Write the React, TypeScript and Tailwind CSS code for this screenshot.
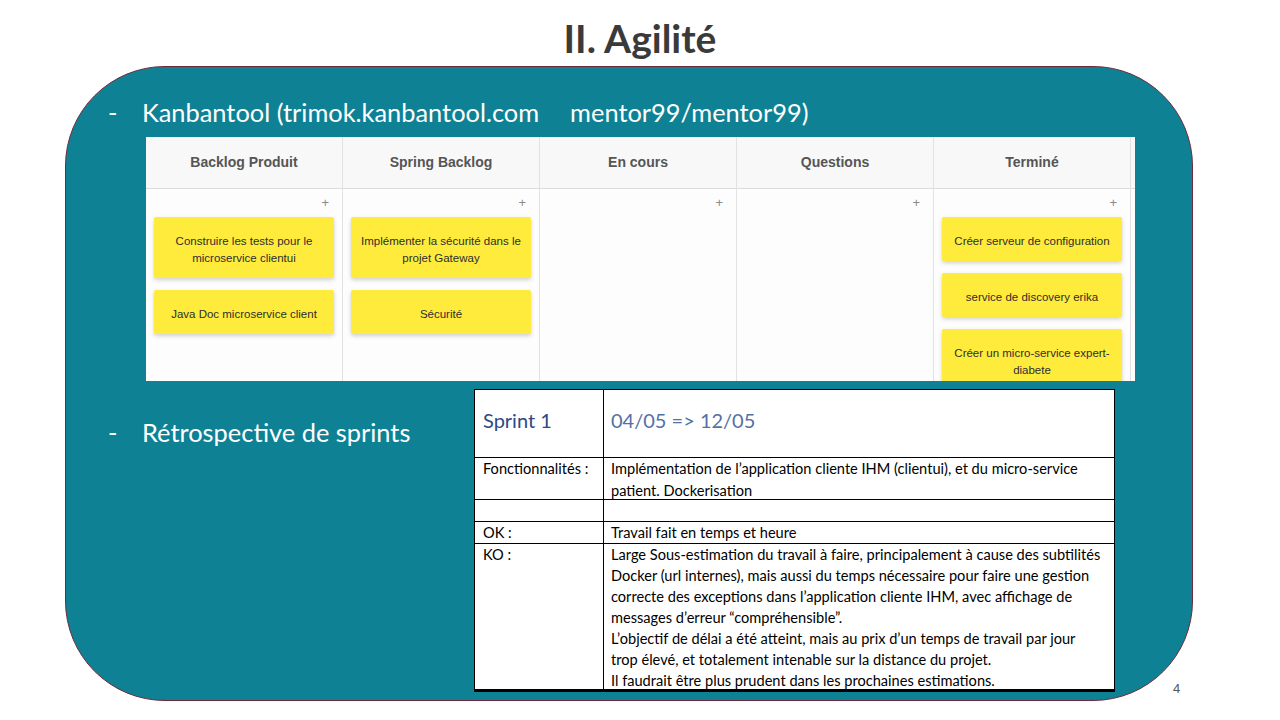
import React from 'react';

type Card = { text: React.ReactNode };

const columns: { title: string; cards: Card[] }[] = [
  {
    title: 'Backlog Produit',
    cards: [
      { text: <>Construire les tests pour le<br />microservice clientui</> },
      { text: 'Java Doc microservice client' },
    ],
  },
  {
    title: 'Spring Backlog',
    cards: [
      { text: <>Implémenter la sécurité dans le<br />projet Gateway</> },
      { text: 'Sécurité' },
    ],
  },
  { title: 'En cours', cards: [] },
  { title: 'Questions', cards: [] },
  {
    title: 'Terminé',
    cards: [
      { text: 'Créer serveur de configuration' },
      { text: 'service de discovery erika' },
      { text: <>Créer un micro-service expert-<br />diabete</> },
    ],
  },
];

const Bullet: React.FC<{ children: React.ReactNode }> = ({ children }) => (
  <div className="flex items-center h-[42px] text-white text-[25.4px] font-['Lato',sans-serif] whitespace-nowrap">
    <span className="w-[76px] pl-[42px]">-</span>
    <span>{children}</span>
  </div>
);

const Kanban: React.FC = () => (
  <div className="ml-[80px] w-[989px] h-[244px] bg-white overflow-hidden flex font-['Liberation_Sans',Arial,sans-serif]">
    {columns.map((col) => (
      <div key={col.title} className="w-[197px] shrink-0 flex flex-col border-r border-[#e2e2e2]">
        <div className="h-[52px] shrink-0 flex items-center justify-center bg-[#f8f8f8] border-b border-[#dcdcdc] text-[14px] font-bold text-[#555]">
          {col.title}
        </div>
        <div className="flex-1 bg-[#fdfdfd] px-[8px]">
          <div className="h-[28px] flex items-center justify-end pr-[5px] text-[13px] text-[#8a8a8a]">+</div>
          <div className="flex flex-col gap-[12px]">
            {col.cards.map((c, i) => (
              <div
                key={i}
                className="bg-[#ffeb3b] rounded-[2px] shadow-[0_2px_4px_rgba(0,0,0,0.18)] pt-[16px] pb-[11px] px-[4px] text-center text-[11.5px] leading-[17px] text-[#2e2e2e]"
              >
                {c.text}
              </div>
            ))}
          </div>
        </div>
      </div>
    ))}
    <div className="flex-1 flex flex-col">
      <div className="h-[52px] bg-[#f8f8f8] border-b border-[#dcdcdc]" />
      <div className="flex-1 bg-[#fdfdfd]" />
    </div>
  </div>
);

const Retro: React.FC = () => (
  <div className="w-[641px] bg-white border border-black text-[14.6px] font-['Lato','Liberation_Sans',sans-serif] text-black">
    <div className="flex h-[68px] border-b border-black">
      <div className="w-[129px] shrink-0 border-r border-black pl-[8px] pt-[15px] text-[20px] text-[#2b4a86]">Sprint 1</div>
      <div className="flex-1 pl-[7px] pt-[15px] text-[20px] text-[#5471a6]">04/05 =&gt; 12/05</div>
    </div>
    <div className="flex h-[42px] border-b border-black leading-[22px]">
      <div className="w-[129px] shrink-0 border-r border-black pl-[8px]">Fonctionnalités :</div>
      <div className="flex-1 pl-[7px] whitespace-nowrap">
        Implémentation de l’application cliente IHM (clientui), et du micro-service
        <br />
        patient. Dockerisation
      </div>
    </div>
    <div className="flex h-[22px] border-b border-black">
      <div className="w-[129px] shrink-0 border-r border-black" />
      <div className="flex-1" />
    </div>
    <div className="flex h-[22px] border-b border-black leading-[21px]">
      <div className="w-[129px] shrink-0 border-r border-black pl-[8px]">OK :</div>
      <div className="flex-1 pl-[7px]">Travail fait en temps et heure</div>
    </div>
    <div className="flex h-[147px] border-b-2 border-black leading-[21px]">
      <div className="w-[129px] shrink-0 border-r border-black pl-[8px]">KO :</div>
      <div className="flex-1 pl-[7px] whitespace-nowrap">
        Large Sous-estimation du travail à faire, principalement à cause des subtilités
        <br />
        Docker (url internes), mais aussi du temps nécessaire pour faire une gestion
        <br />
        correcte des exceptions dans l’application cliente IHM, avec affichage de
        <br />
        messages d’erreur “compréhensible”.
        <br />
        L’objectif de délai a été atteint, mais au prix d’un temps de travail par jour
        <br />
        trop élevé, et totalement intenable sur la distance du projet.
        <br />
        Il faudrait être plus prudent dans les prochaines estimations.
      </div>
    </div>
  </div>
);

const App: React.FC = () => {
  return (
    <div className="relative w-[1280px] h-[720px] bg-white overflow-hidden">
      <h1 className="h-[66px] pt-[16px] text-center text-[39px] leading-[44px] font-bold text-[#3a3a3a] font-['Lato',sans-serif]">
        II. Agilité
      </h1>
      <div className="ml-[65px] w-[1128px] h-[635px] rounded-[100px] border border-[#6e2a3a] bg-[#0e8294] pt-[24px]">
        <Bullet>
          Kanbantool (trimok.kanbantool.com<span className="ml-[31px]">mentor99/mentor99)</span>
        </Bullet>
        <div className="mt-[4px]">
          <Kanban />
        </div>
        <div className="mt-[8px] flex">
          <div className="w-[408px] shrink-0 pt-[22px]">
            <Bullet>Rétrospective de sprints</Bullet>
          </div>
          <Retro />
        </div>
      </div>
      <div className="absolute left-[1173px] top-[679px] text-[13px] text-[#555] font-['Liberation_Sans',sans-serif]">4</div>
    </div>
  );
};

export default App;
